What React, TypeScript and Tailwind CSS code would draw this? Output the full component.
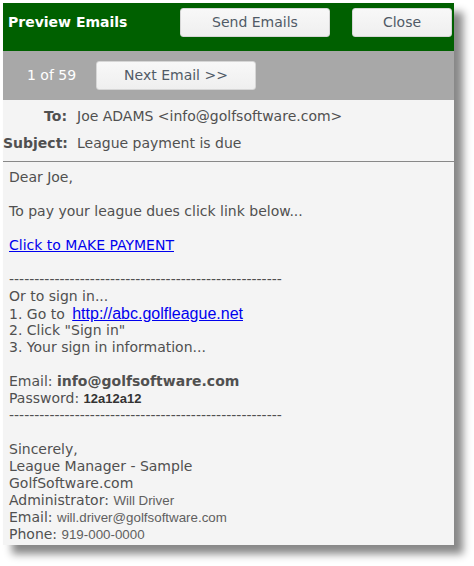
import React from "react";

const V = { fontFamily: '"DejaVu Sans", Verdana, sans-serif' };
const A = { fontFamily: '"Liberation Sans", Arial, sans-serif' };

function Btn({ children, w }: { children: React.ReactNode; w: string }) {
  return (
    <div
      className={`${w} h-[29px] flex items-center justify-center rounded-[3px] border border-[#d6d6d6] bg-gradient-to-b from-[#f8f8f8] to-[#efefef] text-[14px] text-[#505a66]`}
      style={V}
    >
      {children}
    </div>
  );
}

function Line({ children }: { children?: React.ReactNode }) {
  return <div className="h-[17px] leading-[17px] whitespace-nowrap">{children}</div>;
}

export default function App() {
  const dashes = "-".repeat(54);
  return (
    <div className="w-[474px] h-[566px] bg-white pl-[3px] pt-[3px]">
      <div className="w-[451px] h-[542px] flex flex-col bg-[#f4f4f4] overflow-hidden shadow-[9px_9px_8px_#888]">
        <div className="h-[48px] bg-[#006000] flex items-start pt-[5px] shrink-0">
          <div className="pl-[5px] w-[177px] h-[29px] flex items-center text-white font-bold text-[14px]" style={V}>
            Preview Emails
          </div>
          <Btn w="w-[150px]">Send Emails</Btn>
          <div className="w-[22px]" />
          <Btn w="w-[100px]">Close</Btn>
        </div>
        <div className="h-[49px] bg-[#a8a8a8] flex items-center shrink-0">
          <div className="pl-[24px] w-[93px] text-white text-[14px]" style={V}>
            1 of 59
          </div>
          <Btn w="w-[160px]">Next Email &gt;&gt;</Btn>
        </div>
        <div className="h-[61px] flex flex-col shrink-0 text-[14px] text-[#505050]" style={V}>
          <div className="flex items-center h-[27px] mt-[3px]">
            <div className="w-[64px] text-right font-bold">To:</div>
            <div className="pl-[10px]">Joe ADAMS &lt;info@golfsoftware.com&gt;</div>
          </div>
          <div className="flex items-center h-[27px]">
            <div className="w-[64px] text-right font-bold">Subject:</div>
            <div className="pl-[10px]">League payment is due</div>
          </div>
        </div>
        <div className="h-px bg-[#888] shrink-0" />
        <div className="pl-[6px] pt-[7px] text-[14px] text-[#505050]" style={V}>
          <Line>Dear Joe,</Line>
          <Line />
          <Line>To pay your league dues click link below...</Line>
          <Line />
          <Line>
            <span className="text-[#0000ee] underline">Click to MAKE PAYMENT</span>
          </Line>
          <Line />
          <Line>{dashes}</Line>
          <Line>Or to sign in...</Line>
          <Line>
            1. Go to{" "}
            <span className="ml-[3px] text-[#0000ee] underline text-[16px]" style={A}>
              http://abc.golfleague.net
            </span>
          </Line>
          <Line>2. Click "Sign in"</Line>
          <Line>3. Your sign in information...</Line>
          <Line />
          <Line>
            Email: <span className="font-bold text-[14px]">info@golfsoftware.com</span>
          </Line>
          <Line>
            Password:{" "}
            <span className="font-bold text-[13px] text-[#333]" style={A}>
              12a12a12
            </span>
          </Line>
          <Line>{dashes}</Line>
          <Line />
          <Line>Sincerely,</Line>
          <Line>League Manager - Sample</Line>
          <Line>GolfSoftware.com</Line>
          <Line>
            Administrator:{" "}
            <span className="text-[13.33px] text-[#606060]" style={A}>
              Will Driver
            </span>
          </Line>
          <Line>
            Email:{" "}
            <span className="text-[13.33px] text-[#606060]" style={A}>
              will.driver@golfsoftware.com
            </span>
          </Line>
          <Line>
            Phone:{" "}
            <span className="text-[13.33px] text-[#606060]" style={A}>
              919-000-0000
            </span>
          </Line>
        </div>
      </div>
    </div>
  );
}
